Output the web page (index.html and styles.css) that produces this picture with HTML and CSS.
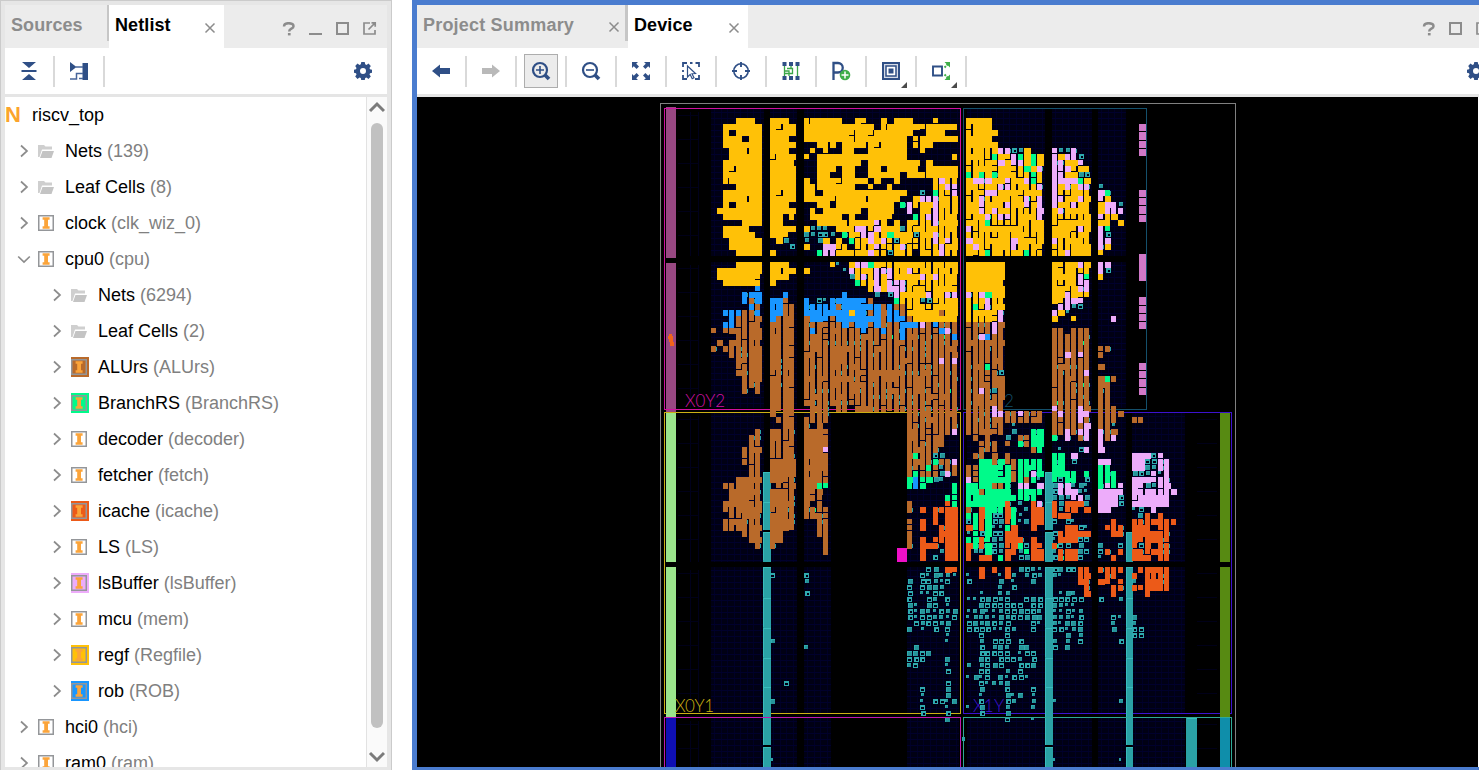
FILE: index.html
```html
<!DOCTYPE html>
<html lang="en">
<head>
<meta charset="utf-8">
<title>Netlist and Device</title>
<link rel="stylesheet" href="styles.css">
</head>
<body>
<svg class="defs" width="0" height="0">
  <symbol id="gear" viewBox="0 0 18 18"><path fill="#2f4f86" fill-rule="evenodd" d="M7.3 0h3.4l.5 2.3 1.3.6 2-1.3 2.3 2.3-1.3 2 .5 1.4 2.3.4v3l-2.3.5-.5 1.4 1.3 2-2.3 2.3-2-1.3-1.3.5-.5 2.3H7.3l-.5-2.3-1.3-.5-2 1.3-2.3-2.3 1.3-2L2 11.2l-2-.5v-3l2-.4.5-1.4-1.3-2 2.3-2.3 2 1.3 1.3-.6zM9 6a3 3 0 1 0 0 6 3 3 0 0 0 0-6z"/></symbol>
  <symbol id="right" viewBox="0 0 14 14"><path d="M4 1.5 10 7l-6 5.500" fill="none" stroke="#8c8c8c" stroke-width="1.7"/></symbol>
  <symbol id="down" viewBox="0 0 14 14"><path d="M1.200 4.500 7 10l5.800-5.500" fill="none" stroke="#8c8c8c" stroke-width="1.700"/></symbol>
  <symbol id="folder" viewBox="0 0 18 20"><path d="M0 16V4h6l1.500 1.500H14V8.500H4L1.500 16z" fill="#cfcfcf"/><path d="M4.500 10H16l-2.500 7H2z" fill="#c4c4c4"/></symbol>
  <symbol id="cell" viewBox="0 0 18 20"><path d="M.75 2.750h14.500v14.500H.75z" fill="none" stroke="#949699" stroke-width="1.500"/><path d="M4.600 4.300h7v2.500H10v6.400h1.600v2.500h-7v-2.500h1.600V6.800H4.600z" fill="#fba43a"/></symbol>
  <symbol id="help" viewBox="0 0 14 14"><path d="M2 4.600C2 2 4 1.200 6.600 1.200S11.500 2 11.500 4.200C11.500 6.800 7.200 6.600 7.200 9.400" fill="none" stroke="#8c8c8c" stroke-width="2.500"/><path d="M5.900 11h2.700v2.400H5.900z" fill="#8c8c8c"/></symbol>
  <symbol id="close" viewBox="0 0 12 12"><path d="m1.500 1.500 9 9m0-9-9 9" stroke="#8c8c8c" stroke-width="1.500"/></symbol>
</svg>
<main class="app">
  <section class="panel netlist">
    <header class="tabs">
      <div class="tab sources">Sources</div>
      <div class="tab active net-tab">Netlist<svg class="x" width="12" height="12"><use href="#close"/></svg></div>
      <div class="controls">
        <svg width="14" height="14"><use href="#help"/></svg>
        <svg width="14" height="14"><path d="M0 12h13" stroke="#8c8c8c" stroke-width="2"/></svg>
        <svg width="14" height="14"><path d="M1 1h11v11H1z" fill="none" stroke="#8c8c8c" stroke-width="2"/></svg>
        <svg width="14" height="14"><path d="M7 1H1v11h11V8M5.500 7.500 12 1M8.500.800h3.700v4" fill="none" stroke="#8c8c8c" stroke-width="1.700"/></svg>
      </div>
    </header>
    <div class="toolbar">
      <div class="tool"><svg width="18" height="18"><path d="M2 0h14L9 6zM2 18h14l-7-6zM1.500 8h15v2h-15z" fill="#2f4f86"/></svg></div>
      <div class="tool"><svg width="18" height="18"><path d="M0 0l6.500 5L0 10zM12.500 1H18v17h-5.500z" fill="#2f4f86"/><path d="M6 5h7M0 17h6.500v-5.500H13M9 16.500h4" fill="none" stroke="#47659a" stroke-width="1.500"/></svg></div>
      <svg class="gear" width="18" height="18"><use href="#gear"/></svg>
    </div>
    <div class="tree-wrap">
      <div class="tree">
        <div class="row root"><span class="n">N</span>riscv_top</div>
        <div class="row"><svg class="tw"><use href="#right"/></svg><svg class="ic"><use href="#folder"/></svg>Nets <i>(139)</i></div>
        <div class="row"><svg class="tw"><use href="#right"/></svg><svg class="ic"><use href="#folder"/></svg>Leaf Cells <i>(8)</i></div>
        <div class="row"><svg class="tw"><use href="#right"/></svg><svg class="ic"><use href="#cell"/></svg>clock <i>(clk_wiz_0)</i></div>
        <div class="row"><svg class="tw"><use href="#down"/></svg><svg class="ic"><use href="#cell"/></svg>cpu0 <i>(cpu)</i></div>
        <div class="row sub"><svg class="tw"><use href="#right"/></svg><svg class="ic"><use href="#folder"/></svg>Nets <i>(6294)</i></div>
        <div class="row sub"><svg class="tw"><use href="#right"/></svg><svg class="ic"><use href="#folder"/></svg>Leaf Cells <i>(2)</i></div>
        <div class="row sub"><svg class="tw"><use href="#right"/></svg><svg class="ic alu"><use href="#cell"/></svg>ALUrs <i>(ALUrs)</i></div>
        <div class="row sub"><svg class="tw"><use href="#right"/></svg><svg class="ic branch"><use href="#cell"/></svg>BranchRS <i>(BranchRS)</i></div>
        <div class="row sub"><svg class="tw"><use href="#right"/></svg><svg class="ic"><use href="#cell"/></svg>decoder <i>(decoder)</i></div>
        <div class="row sub"><svg class="tw"><use href="#right"/></svg><svg class="ic"><use href="#cell"/></svg>fetcher <i>(fetch)</i></div>
        <div class="row sub"><svg class="tw"><use href="#right"/></svg><svg class="ic icache"><use href="#cell"/></svg>icache <i>(icache)</i></div>
        <div class="row sub"><svg class="tw"><use href="#right"/></svg><svg class="ic"><use href="#cell"/></svg>LS <i>(LS)</i></div>
        <div class="row sub"><svg class="tw"><use href="#right"/></svg><svg class="ic lsb"><use href="#cell"/></svg>lsBuffer <i>(lsBuffer)</i></div>
        <div class="row sub"><svg class="tw"><use href="#right"/></svg><svg class="ic"><use href="#cell"/></svg>mcu <i>(mem)</i></div>
        <div class="row sub"><svg class="tw"><use href="#right"/></svg><svg class="ic regf"><use href="#cell"/></svg>regf <i>(Regfile)</i></div>
        <div class="row sub"><svg class="tw"><use href="#right"/></svg><svg class="ic rob"><use href="#cell"/></svg>rob <i>(ROB)</i></div>
        <div class="row"><svg class="tw"><use href="#right"/></svg><svg class="ic"><use href="#cell"/></svg>hci0 <i>(hci)</i></div>
        <div class="row"><svg class="tw"><use href="#right"/></svg><svg class="ic"><use href="#cell"/></svg>ram0 <i>(ram)</i></div>
      </div>
      <div class="scroll">
        <svg width="18" height="26"><path d="m3 14 7-7 7 7" fill="none" stroke="#7b7b7b" stroke-width="3"/></svg>
        <div class="thumb"></div>
        <svg width="18" height="39"><path d="m3 25 7 7 7-7" fill="none" stroke="#7b7b7b" stroke-width="3"/></svg>
      </div>
    </div>
  </section>
  <section class="panel device">
    <header class="tabs">
      <div class="tab summary">Project Summary<svg class="x" width="12" height="12"><use href="#close"/></svg></div>
      <div class="tab active dev-tab">Device<svg class="x" width="12" height="12"><use href="#close"/></svg></div>
      <div class="controls">
        <svg width="14" height="14"><use href="#help"/></svg>
        <svg width="14" height="14"><path d="M1 1h11v11H1z" fill="none" stroke="#8c8c8c" stroke-width="2"/></svg>
        <svg width="14" height="14"><path d="M7 1H1v11h11V8" fill="none" stroke="#8c8c8c" stroke-width="1.700"/></svg>
      </div>
    </header>
    <div class="toolbar">
      <div class="tool"><svg width="18" height="18"><path d="M0 9 8 2.500V6h10v6H8v3.500z" fill="#2f4f86"/></svg></div>
      <div class="tool"><svg width="18" height="18"><path d="M18 9 10 2.500V6H0v6h10v3.500z" fill="#b9b9b9"/></svg></div>
      <div class="tool on"><span><svg width="20" height="20"><circle cx="9" cy="9" r="7" fill="none" stroke="#2f4f86" stroke-width="2.200"/><path d="M5 9h8M9 5v8" stroke="#2f4f86" stroke-width="1.600"/><path d="m14 14 4 4" stroke="#2f4f86" stroke-width="3.800"/></svg></span></div>
      <div class="tool"><svg width="20" height="20"><circle cx="9" cy="9" r="7" fill="none" stroke="#2f4f86" stroke-width="2.200"/><path d="M5 9h8" stroke="#2f4f86" stroke-width="1.600"/><path d="m14 14 4 4" stroke="#2f4f86" stroke-width="3.800"/></svg></div>
      <div class="tool"><svg width="18" height="18"><path d="M0 0h6L4.200 1.800 7 4.600 4.600 7 1.800 4.200 0 6zM18 0v6l-1.800-1.800L13.400 7 11 4.600l2.800-2.800L12 0zM0 18v-6l1.800 1.800L4.600 11 7 13.400l-2.800 2.800L6 18zM18 18h-6l1.800-1.800L11 13.400l2.400-2.400 2.800 2.800L18 12z" fill="#2f4f86"/></svg></div>
      <div class="tool"><svg width="20" height="20"><path d="M2 6V2h4m3 0h2.500m3 0h3.500v4m0 8v4h-4m-8 0H2v-4m0-5v2" fill="none" stroke="#2f4f86" stroke-width="1.800"/><path d="m6.500 5 8 7.500-3.500.200 2 4-1.800 1-2-4.300L6.500 16z" fill="#fff" stroke="#2f4f86" stroke-width="1.200"/></svg></div>
      <div class="tool"><svg width="20" height="20"><circle cx="10" cy="10" r="7.200" fill="none" stroke="#2f4f86" stroke-width="1.600"/><path d="M10 1v5m0 8v5M1 10h5m8 0h5" stroke="#2f4f86" stroke-width="1.900"/></svg></div>
      <div class="tool"><svg width="18" height="18"><path d="M2.500 4v11M2 9h5v5M5 6.500h5.500v5H3M9 3v4M15.500 4v11" fill="none" stroke="#3aa648" stroke-width="1.300"/><path d="M.5 0h4v4h-4zM7 0h4v4H7zm6.500 0h4v4h-4zM.5 14h4v4h-4zM7 14h4v4H7zm6.500 0h4v4h-4z" fill="#2f4f86"/></svg></div>
      <div class="tool"><svg width="20" height="20"><path d="M2.500 19V2H7a4.200 4.200 0 0 1 0 9.500H3" fill="none" stroke="#2f4f86" stroke-width="2.300"/><circle cx="14" cy="14" r="5.300" fill="#3fae49"/><path d="M10.500 14h7M14 10.500v7" stroke="#fff" stroke-width="1.500"/></svg></div>
      <div class="tool menu"><svg width="18" height="18"><path d="M1 1h16v16H1z" fill="#d5dbe7" stroke="#2f4f86" stroke-width="2"/><path d="M4 4h10v10H4z" fill="#fff" stroke="#2f4f86" stroke-width="1.500"/><path d="M6.500 6.500h5v5h-5z" fill="#2f4f86"/></svg></div>
      <div class="tool menu"><svg width="18" height="18"><path d="M1 4.500h9v9H1z" fill="#fff" stroke="#2f4f86" stroke-width="1.900"/><path d="m12.500 5.500 4-4m-4 11 4 4" stroke="#3fae49" stroke-width="2" stroke-dasharray="2 1"/><path d="M12.500 0H18v5.500zM18 12.500V18h-5.500z" fill="#3fae49"/></svg></div>
      <svg class="gear" width="18" height="18"><use href="#gear"/></svg>
    </div>
    <svg id="chip" width="1062" height="670" viewBox="417 97 1062 670" shape-rendering="crispEdges"></svg>
  </section>
</main>
<script src="device.js"></script>
</body>
</html>
```
FILE: styles.css
```css
* { box-sizing: border-box; }
body { margin: 0; background: #fff; font: 18px "Liberation Sans", Arial, sans-serif; color: #000; }
.defs { display: block; position: absolute; }
.app { display: flex; gap: 20px; width: 1479px; height: 770px; overflow: hidden; }
.panel { display: flex; flex-direction: column; overflow: hidden; flex: none; }
.netlist { width: 392px; padding: 4px 4px 3px 4px; background: #e6e6e6; border: 1px solid #cbcbcb; border-bottom: 0; }
.device { width: 1067px; padding: 5px 0 3px 5px; background: #4a7ccf; }
.tabs { display: flex; height: 43px; background: #ececec; flex: none; }
.tab { display: flex; align-items: center; justify-content: space-between; font-weight: bold; color: #8c8c8c; padding-bottom: 3px; white-space: nowrap; }
.tab.active { background: #fff; color: #000; letter-spacing: .1px; }
.tab .x { margin-top: 5px; flex: none; }
.sources { width: 104px; padding: 4px 0 0 6px; border-right: 2px solid #c6c6c6; height: 36px; margin-bottom: 7px; letter-spacing: .1px; }
.net-tab { width: 115px; padding-left: 6px; padding-right: 8px; }
.summary { width: 211px; height: 36px; padding: 4px 5px 0 6px; border-right: 3px solid #c6c6c6; letter-spacing: .2px; }
.summary .x { margin-top: 3px; }
.dev-tab { width: 120px; padding: 0 8px 3px 6px; }
.controls { display: flex; gap: 13px; margin-left: auto; padding: 17px 10px 0 0; }
.device .controls { margin-right: -21px; }
.toolbar { display: flex; align-items: center; height: 49px; background: #fff; border-bottom: 3px solid #e5e5e5; flex: none; }
.tool { width: 50px; height: 31px; display: flex; align-items: center; justify-content: center; border-right: 2px solid #d9d9d9; flex: none; position: relative; }
.tool svg { flex: none; }
.on span { display: flex; align-items: center; justify-content: center; width: 34px; height: 34px; flex: none; background: #ececec; border: 1px solid #adadad; }
.menu::after { content: ""; position: absolute; right: 8px; bottom: -1px; border-left: 6px solid transparent; border-bottom: 6px solid #4a4a4a; }
.gear { margin-left: auto; margin-right: 15px; flex: none; }
.device .gear { margin-right: -6px; }
.tree-wrap { display: flex; flex: 1; min-height: 0; background: #fff; overflow: hidden; }
.tree { flex: 1; overflow: hidden; }
.row { display: flex; align-items: center; height: 36px; padding-left: 12px; white-space: pre; }
.row i { font-style: normal; color: #808080; }
.row.sub { padding-left: 45px; }
.row.root { padding-left: 0; }
.n { color: #fba42c; font-weight: bold; font-size: 22px; width: 27px; }
.tw { width: 14px; height: 14px; margin-right: 7px; flex: none; }
.ic { width: 18px; height: 20px; margin-right: 9px; flex: none; }
.alu { background: #b96a2a; }
.branch { background: #00fa8a; }
.icache { background: #ec5a18; }
.lsb { background: #edacfa; }
.regf { background: #ffc107; }
.rob { background: #1896ff; }
.scroll { display: flex; flex-direction: column; width: 21px; padding-right: 2px; background: #fafafa; border-left: 1px solid #e2e2e2; flex: none; }
.scroll svg { display: block; flex: none; }
.thumb { flex: 1; width: 12px; margin-left: 4px; border-radius: 6px; background: #c1c1c1; }
#chip { display: block; flex: none; background: #000; }
.region { font: 300 17px Lato, "DejaVu Sans", sans-serif; }
```
FILE: device.js
```js
const segs = [
  [711,717,723,729,736,742,749,755,762],
  [770,776,783,789,796],
  [804,810,817,823,830,836,842,849,855,861,868,874,881,887,894,900,907,913,920,926,933,939,945,952,958],
  [966,973,979,985,992,998,1005,1011,1018,1024,1031,1037,1044],
  [1052,1058,1065,1071,1078,1084,1091],
  [1098,1105,1111,1118,1124],
  [1132,1138,1145,1151,1158,1164,1171,1177]
];
const colors = { y:'#ffc107', b:'#b96a2a', u:'#1896ff', g:'#00fa8a', p:'#edacfa', o:'#ec5a18' };
const bands = [
[118, `
....YYY. YYY. yyyYYY..YY..y.YYY...y... YYYY........
..YYYYYY YYYY YYYYYYYYYYy.yYYYYYyYYYyy YYYY........
..Y.YYYY YYYY YYYYYYYYYYYYYYYYY..YYY.. YYYYY.......
..YYY.YY YYY. YYYYYYYyyYYYYYYY.yyYYYYY YYYY........
..YYYYYY YYyY ..YYY.YYYyYYYYYY.yyY.... YYYYY.......
...YYyYY YYY. .y.Y..yy..YYYYYY..y..... yYYyYppttY.. pttp..
...YYYYY YYYY y.YYYYYYYYYYYYYY.......y yyyygYypgygy pyppt.
..YYYYYY YYYy ..YYYYYYY.YYYYYYYY.y.... yyyyypyppygy ppyyp.
..YYYYYY YYYY ..YYY.YY..YY.YYYYY.yyyyy yyyyyyyyygyp pppyYy
..YYYYYY YYYY ..YY..YY..YYYYY.YYyyyyyy gygygyYyyygy ppyytt
..yyYYYY YYYy y.YYyyYYYY.y..y.....ypyy yppPyypyypgy ppppgy
....YYYY YYYY YyYYYYYY..y..y......yypp yyyyyppyyyyp pypypp t...
..YYYYYY YYYY Yy.YYYYYYYYYYYYY..t.gyyp yyyppyyyyyyy pyyyyy pg..
..YYYYYY YYyY YyYYYYYYyyYYYYy..ypppyyy yypyyyyyypyp ppyypy py..
..Y.YYYY YYY. ..yY.YYYYYYYYY.gpyyypyyy yypyyypyypyp pyypyy yppt
.YYYYYYY YYYY .y.YYYYYY.YYYY..p.yypyyy yypypyyyyyyp ypyyyy yppp
..YYYYYY YY.y .yYYYY.y..YYYy...gyppyyy yyypyppyyyyp yyyyyy pyY.
.....yYY YY.. ..yYYYyyyyYpy.y.yyyypyyy yyygyyyyyyyy yyyyyy yy.y
..YYYY.. YYYY yttt.Yyyppypyyytyyyyyyyy pyyyyyyyyyyy yyyypy pg..
..YYYYY. YYY. ttttt.gyypPyygyyytyypyyy yyyyyyyyyyyy yyyyyy pt..
...yYYYY .yt. t.ty.y.gyyPypytyyyyypypy pyyyyyypyyyy pyyyyy pp..
...YYYYY ...t y..PPyy.yyYpyyypyyyyypyy ypyyyyypyyyy yyyyyy py..
....YYYY y... ..gppYyyyyPyytyyy.yyypyy yyygyyyyygyy yypyyy y...`],
[262, `
....YYYY YYY. ....yt.yppgyyyyyyyyyyyyy YYYYYY...... yyyypy pp..
.YYYYYYY YYYy y.....tpyyypppyypyyyyyyy YYYYYY...... yyyyyY pt..
.YYYYYYY YYY. .......typypypyyyypypyyy YYYYYY...... yyyypg y...
..YYYYyy Y... ........gyypypppyyyyyyyy YYYYYY...... yyyypp
.......u .... ..........ypypppyyyyyyyy yYYYYY...... yyyypp
.....uUU ..u. ......u....t.tpyyyypyypp pypgyy...... yypyyy
.....ubU UUb. u.ttuUUUUub...gyyyttyyyy yyYpyy...... yyppp.
......ub UUbb uuuuUbUUUUUUbubbYYyYYYYY ygypyy...... .pptt.
..uuubbu UUbb UUuUUUUyUubUbuubYYYYYbYY yYyYyp...... pyt...
...ubbbb UbBb bUUUbUUUUUUUbuUubYYYYYyy yyyyyp...... y..y.. ..p.
..uubbbb BbBb bbbbbbUbUUbUbbbUUupbubbb bbbbpb...... ......
b.BBbbBB BbBb bubbbbbbbubbubbubbbbbupb bbbbpb...... bb.bbb
....bbBB BbBb bbbbbbbbbbbbbbbubbbbbbbu bbpubb...... bbbbbb
.b.bbbbB BbBb bbbbbbbbbbbbbbbbbbbbbbbb bbbbbb...... bbbbbb
b.bbbbBB BbBb bbbbBBbbbbbbbbbbbbbbbbbb bbbbbb...... bbbbbb bb..
...bbbBB BbBb bbbbBBbbbbbbbbbbbbbbbbbb bbbbbb...... bbpbpb b...
....bbBB BbBb bbbbBBbbbbbbbbbbbbbbbpbp bbbbbb...... bbbbbb
....bbBB BbBb bbbbBbbbbbbbbbbbbbbbbbbb bbbgbb...... bbbbbb b...
....bbBB BbBb bbbbbbbbbbBBBBBbbbBbbbbb bbbbbt...... bbbbbp
.....bBB BbBb bbbbBBBbbbBbBBbbbBbbbbbb bbbbBB...... bbbbbb bgb.
.....bbb BbBb bbbbbbbBbbbbbbbbbBbbbbbb bbbbBB...... bbbbbb bb..
.....b.b BbBb bbbbbbbbbbbbbbbbbbbbbbbb bbpbtb...... bbbbbb bb..
........ BbBb bbbbbbbbbbbbbbbbbbbbbbbb bbbbbb...... bbbbbb bb..
........ BbBb bbbbbbbbbbbbbbbbbbbbbbbb bbbbbb...... bbbbbb bb..
........ BbBb .bbb.bb.bbbbbbbbbbbbbbbb bbbbpb...... pbbbpb bbb.`],
[411, `
........ B.Bb .bbb............bbbbbbbb bbbbppbbpbbb bpbbpp bbbb
........ .bBb bbbb............bbbbbbbb bbbbbbbbbbbb bbbbpb bbb. bb.....
........ ..Bb b.b.............bbbbbbbb bbbbbb.t.... bbbbbp bbt.
.......b BBbb BBBb............Bbbbbbbp bbbBbb.t..gG bbpbpp pbb.
......bb BbBb BBBb............Bbbbbb.. .b.b..t.bbGG g.p.bp pbp.
......bb bbBb BBBb............bbbbbb.. ..bbb.b.gbGG ...... p...
.....bBB bbBb BBBp............bbbbb... ..bbb.....bg .t..tp p...
.....bbb bbBb BBBb............bgbbtt.. .bb.b.b..... gG.p..
.....bbb BBBB BBBb............bbbbgbbp ..GGbGBbgggg gG.t.. PP..
......bb BBBB BBBb............bbbgbtbb bbGGGGGbgGgg GG.... gg..
......bb BBBB BBbb............bgbbbtpb bbGGGGGbggpg GGgg.g ggg.
....BBBB BBBb BBbb............gugGtt.. pbGGGGGbgbgt gtgg.t ggg.
..bbBBbb .bbb BBgg............guG....g GgGGbbg.pp.p tpPttt gpgp
...BBBBb BBbb BbB....................g GGbGGGG.gGgg tpPPtt PPPp
...bBBBb BBbb BbB...................gg gGGGGGGgggg. tttppt PPPt`],
[501, `
..BBBBbB BBbb B.b.............b.....og GGGGGGo.t.op otOOOt PPPt PPPPPp.
..bbBBBB BBbb bbbb............b.O.ooOO b.oGggOg.tOO otOO.O PP.. tt.p...
...bBBBb BBbb bbbb................o.OO ggoGttOgt.OO oOO... .... .to.o..
..bBBbbb BBBb ..bb............b.O.o.OO tgoGttOgttOO t.tt.. ..o. oooOooo
..bbbbBb BBBb ..bb............b.O..oOO ogoGttgO..O. ..OOtt .ooo OOo.oo.
.....bBb BB.. ..bb............b....oOO tgtGttOO.... toOOOO ..oo OOOOoo.
......BB BB.. ...b............b.O.ooOO ggoGttOOo.o. toOOtt .... ooOOoo.
.......b b... ...b............b.OOo.OO ogoGttOOgtOO ott.t. t..t otO.oo.
........ .... ...b..............O..tOO ottGttOotgOO toOOtt to.o oooOoo.
........ .... ..................O.t.OO o.OO.gO.ttOO toOOt. t.o. OOO.oo.`],
[567, `
........ .... ...................tt.Oo ..O.o.O.tttt ttttoo oooo .oOOoo.
........ t... t.................tttttt t.O..tOt.ttt tt..oo .oo. o.oooo.
........ .... t...............t.ttttt. t....t.t..t. ....oo oo.o t.OOoo.
........ .... ................t.tttt.. .....t.t.... .....o ..oo ooOOoo.
........ .... t...............t.tttt.. ..t..tt..... .ttt.o ..o. ..o....
........ .... ................t..tt.t. ttttttt..ttt ttttt. t..t
........ .... ................tt.tt.t. ..ttttttt.tt tttt..
........ .... ................tttttttt tttttttttttt ttttt.
........ .... ................tttttttt tttttttttttt ttttt. ..tt t......
........ .... .................tttttt. ttttttt...tt ttttt. ..t. t......
........ .... ................t.t.t.t. tttttttt..t. ttttt. ..t. tt.....
........ .... ......................t. ..t...t..... ..t.t. .... tt.....
........ t... ......................t. ..t.ttt.t... t.t.t. ...t
........ .... t................t...... ..t.ttt.tt.. t.t...
........ .... ................tttt.... ..ttttt.ttt.
........ .... ................ttt...t. ..tt.tttt.t.
........ .... ................tt....t. t.tttt..ttt.
........ .... ......................t. ..tt..t.t...
........ .... ........................ tttt.ttttt..
........ ..t. ......................t. ..ttttt.....
........ .... ..................t...t. ..t...t...t.
........ .... ..................t...t. ..t...ttt.t.
........ t... ..................t.tttt ..t...tt..t. t..... ...t
........ .... ..................t...t. t.t...t...t.
........ .... ..................t...t. ..t...t.....
........ .... ......................t. ......t...t.`]
];
// Cells of the far right clock region that start above the split row.
const east = [[453,'PPPtp..'],[459,'PPttpp.'],[465,'PPttpp.'],[471,'tttptp.'],[477,'PPPppp.'],[483,'PpttpP.'],[489,'PpPpppp'],[495,'PPPPPp.']];

let out = '';
const rect = (x, y, w, h, f) => { out += `<rect x="${x}" y="${y}" width="${w}" height="${h}" fill="${f}"/>`; };
const frame = (x, y, x2, y2, c) => { out += `<rect x="${x + .5}" y="${y + .5}" width="${x2 - x}" height="${y2 - y}" fill="none" stroke="${c}"/>`; };
const noise = (x, y) => { let n = (x * 374761 + y * 668265 + 1013) | 0; n = Math.imul(n ^ (n >>> 13), 1274126177); return ((n ^ (n >>> 16)) >>> 0) % 100; };

function fabric(x, y, x2, y2) {
  rect(x, y, x2 - x, y2 - y, '#000014');
  for (let i = x + 3; i < x2; i += 6.5) rect(Math.round(i), y, 1, y2 - y, '#000026');
  for (let j = y + 3; j < y2; j += 6) rect(x, j, x2 - x, 1, '#00002c');
}
for (const [y, y2] of [[109,256],[262,408],[413,562],[567,713],[718,767]]) {
  const low = y > 410;
  fabric(711, y, 764, y2);
  fabric(770, y, 797, y2);
  if (low) { fabric(804, y, 831, y2); fabric(907, y, 959, y2); fabric(1132, y, 1185, y2); }
  else fabric(804, y, 960, y2);
  fabric(967, y, y === 262 ? 1005 : 1045, y2);
  fabric(1052, y, 1092, y2);
  fabric(1098, y, 1126, y2);
  rect(690, y + 3, 1, y2 - y - 3, '#00001c');
  rect(698, y + 3, 1, y2 - y - 3, '#00001c');
  for (let j = y + 6; j < y2; j += 24) { rect(678, j, 20, 1, '#000018'); if (low) rect(1197, j, 20, 1, '#000018'); }
}
frame(660, 103, 1235, 780, '#808080');
rect(666, 107, 10, 151, '#984882');
rect(666, 263, 10, 149, '#984882');
frame(664, 108, 960, 409, '#d010a0');
frame(963, 108, 1146, 409, '#14506c');
frame(664, 412, 960, 713, '#ccb014');
frame(963, 412, 1231, 713, '#3c12d0');
rect(666, 413, 10, 149, '#9be58c'); rect(666, 567, 10, 150, '#9be58c');
rect(1220, 413, 10, 149, '#578a12'); rect(1220, 567, 10, 150, '#578a12');
rect(666, 718, 10, 50, '#0f0fb4'); rect(1220, 718, 10, 50, '#0f8eaa');
for (const [y, h] of [[124,7],[132,8],[141,7],[149,7],[190,7],[198,7],[206,8],[215,7],[254,27],[297,8],[306,7],[314,7],[322,7],[363,7],[371,7],[379,8],[388,7]]) rect(1139, y, 7, h, '#d078c8');
out += '<path d="M669 334h3v2h1v6h1v4h-4v-4h-1v-3h-1v-3h1z" fill="#f0641c"/>';
out += '<g class="region" shape-rendering="auto"><text x="685" y="407" textLength="40" fill="#d010a0">X0Y2</text><text x="675" y="712" textLength="39" fill="#ccb014">X0Y1</text><text x="973" y="712" textLength="31" fill="#3c12d0">X1Y</text><text x="1004" y="407" fill="#14506c">2</text></g>';

function bram(x, w, start) {
  for (const [a, b] of [[472,501],[502,530],[532,560],[567,597],[598,627],[628,657],[658,687],[687,745],[747,767]]) {
    if (a < start) continue;
    rect(x, a, w, b - a + (a === 532 ? 2 : a === 687 || a === 502 ? 0 : 1), '#2aa2a6');
    rect(x, a, w, 1, '#38bcbc'); rect(x, a, 1, b - a, '#38bcbc');
  }
}
bram(763, 8, 472); bram(1045, 8, 472); bram(1126, 7, 532);
rect(1186, 718, 11, 50, '#2aa2a6'); rect(1187, 718, 10, 1, '#38bcbc');

function cells(cols, y, text) {
  [...text].forEach((ch, i) => {
    const x = cols[i], pitch = cols[i + 1] - x, n = noise(x, y);
    if (ch === '.' || !pitch) return;
    if (ch === 't') {
      const s = n < 18 ? 3 : n < 40 ? 4 : 5, dx = n % 2;
      rect(x + dx, y, s, s, '#2fabaf');
      if (n > 80) rect(x + dx + 2, y + 2, 2, 2, '#000014');
      else if (n > 60) rect(x + dx + 1, y + 2, 3, 2, '#000014');
      else rect(x + dx + 1, y + 1, s - 1, s - 1, '#269499');
      return;
    }
    const key = ch.toLowerCase(), solid = ch !== key;
    const wide = solid ? n > 5 : key === 'y' ? n > 45 : n > 88;
    rect(x, y, wide ? pitch : 5, n < (solid ? 4 : 12) ? 5 : 6, colors[key]);
    if (!wide && n > 70 && pitch > 5) rect(x + 5, y + 1, 1, 4, n > 87 ? '#00fa8a' : '#2aa2a6');
  });
}
for (const [top, map] of bands) {
  map.trim().split('\n').forEach((line, r) => {
    line.trim().split(/ +/).forEach((t, s) => cells(segs[s], top + r * 6, t));
  });
}
for (const [y, t] of east) cells(segs[6], y, t);
rect(897, 548, 10, 14, '#f010c8');
out += '<path d="M664.500 767V717.500h296V767" fill="none" stroke="#c018b0"/><path d="M963.500 767V717.500h268V767" fill="none" stroke="#2eaa98"/>';
rect(962, 737, 3, 4, '#2aa2a6');
rect(771, 758, 2, 3, '#2aa2a6'); rect(1053, 758, 2, 3, '#2aa2a6'); rect(1119, 758, 2, 3, '#2aa2a6');
rect(1478, 97, 1, 670, '#fff');
document.getElementById('chip').innerHTML = out;
```
